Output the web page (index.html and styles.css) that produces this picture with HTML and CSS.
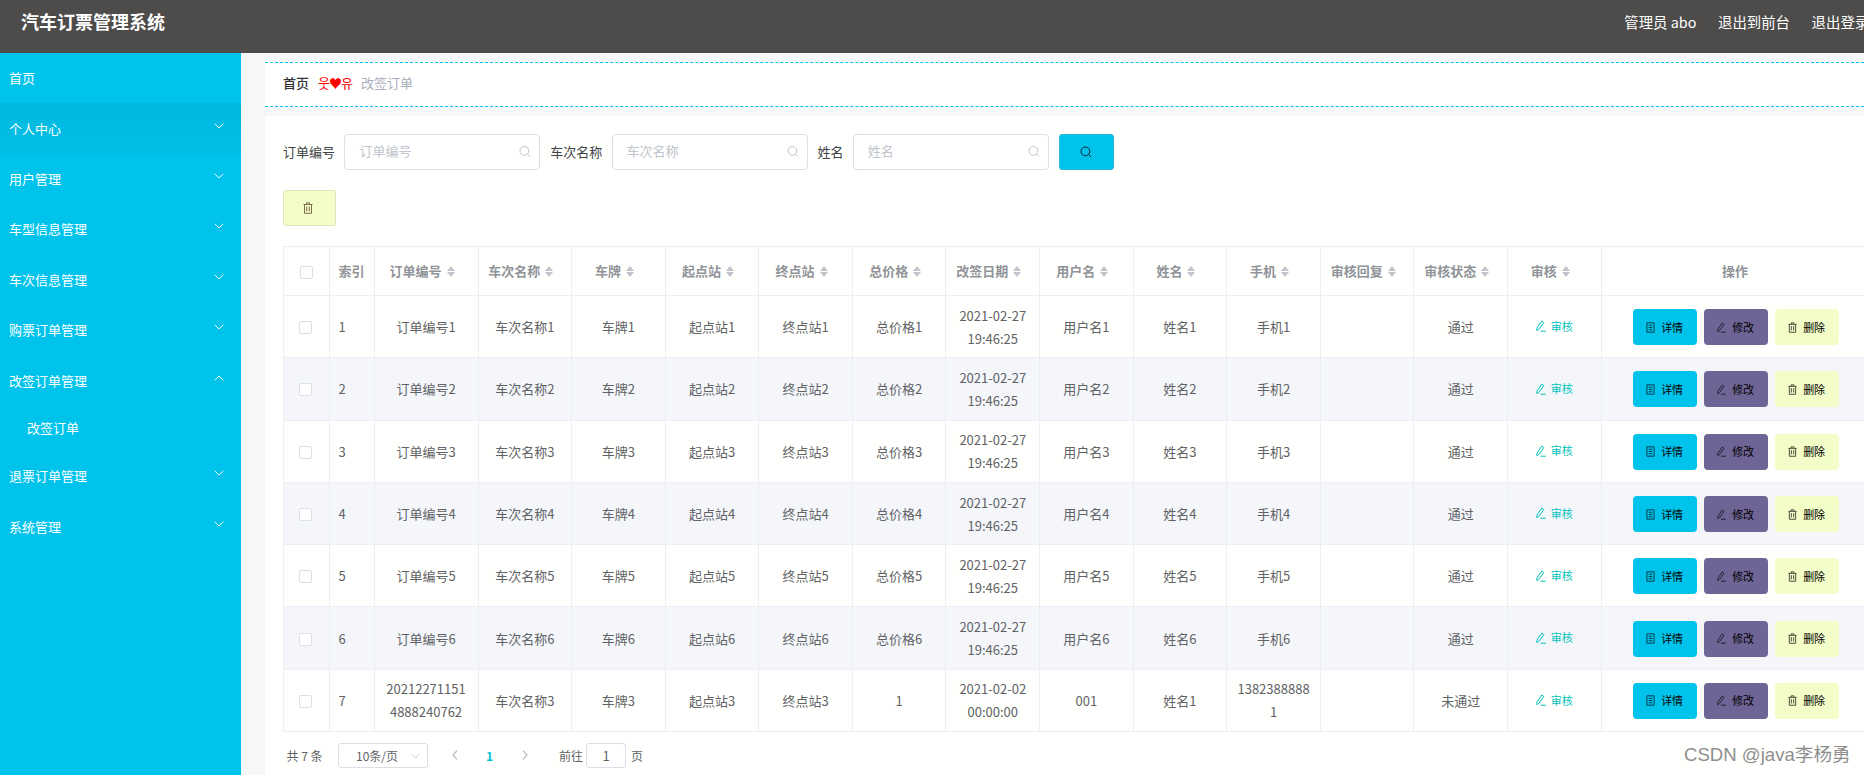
FILE: index.html
```html
<!DOCTYPE html>
<html lang="zh-CN">
<head>
<meta charset="utf-8">
<title>汽车订票管理系统</title>
<link rel="stylesheet" href="styles.css">
</head>
<body>
<svg class="defs" width="0" height="0" aria-hidden="true">
  <symbol id="i-search" viewBox="0 0 12 12"><circle cx="5.4" cy="5.4" r="4.4" fill="none" stroke="currentColor" stroke-width="1"/><path d="M8.6 8.6L11 11" fill="none" stroke="currentColor" stroke-width="1"/></symbol>
  <symbol id="i-trash" viewBox="0 0 10 12"><path d="M0.5 2.5H9.5M3.5 2.5V0.8H6.5V2.5M1.5 2.5V11.3H8.5V2.5M3.7 4.5V9.3M6.3 4.5V9.3" fill="none" stroke="currentColor" stroke-width="1"/></symbol>
  <symbol id="i-doc" viewBox="0 0 10 12"><path d="M1 0.8H9V11.2H1ZM3 3.5H7M3 6H7M3 8.5H7" fill="none" stroke="currentColor" stroke-width="1"/></symbol>
  <symbol id="i-pen" viewBox="0 0 10 12"><path d="M5.8 1L7.8 2.6L2.8 9.4L0.8 10.6L1 8ZM4.5 11.2H9.8" fill="none" stroke="currentColor" stroke-width="1"/></symbol>
  <symbol id="i-down" viewBox="0 0 10 6"><path d="M0.7 0.8L5 5L9.3 0.8" fill="none" stroke="currentColor" stroke-width="1"/></symbol>
  <symbol id="i-up" viewBox="0 0 10 6"><path d="M0.7 5.2L5 1L9.3 5.2" fill="none" stroke="currentColor" stroke-width="1"/></symbol>
  <symbol id="i-left" viewBox="0 0 6 10"><path d="M5 0.7L1 5L5 9.3" fill="none" stroke="currentColor" stroke-width="1.2"/></symbol>
  <symbol id="i-right" viewBox="0 0 6 10"><path d="M1 0.7L5 5L1 9.3" fill="none" stroke="currentColor" stroke-width="1.2"/></symbol>
</svg>
<header class="topbar">
  <div class="brand">汽车订票管理系统</div>
  <nav class="top-links"><span>管理员 abo</span><span>退出到前台</span><span>退出登录</span></nav>
</header>
<div class="layout">
  <aside class="sidebar">
    <div class="menu-item menu-first"><span>首页</span></div>
    <div class="menu-item is-hover"><span>个人中心</span><svg class="chev"><use href="#i-down"/></svg></div>
    <div class="menu-item"><span>用户管理</span><svg class="chev"><use href="#i-down"/></svg></div>
    <div class="menu-item"><span>车型信息管理</span><svg class="chev"><use href="#i-down"/></svg></div>
    <div class="menu-item"><span>车次信息管理</span><svg class="chev"><use href="#i-down"/></svg></div>
    <div class="menu-item"><span>购票订单管理</span><svg class="chev"><use href="#i-down"/></svg></div>
    <div class="menu-item"><span>改签订单管理</span><svg class="chev"><use href="#i-up"/></svg></div>
    <div class="submenu-item">改签订单</div>
    <div class="menu-item"><span>退票订单管理</span><svg class="chev"><use href="#i-down"/></svg></div>
    <div class="menu-item"><span>系统管理</span><svg class="chev"><use href="#i-down"/></svg></div>
  </aside>
  <main class="main">
    <div class="crumbs">
      <span class="crumb-home">首页</span>
      <span class="crumb-sep">웃♥유</span>
      <span class="crumb-cur">改签订单</span>
    </div>
    <section class="panel">
      <form class="search-row">
        <label class="field-label">订单编号</label>
        <div class="input-wrap"><input class="text-input" placeholder="订单编号"><svg class="input-icon"><use href="#i-search"/></svg></div>
        <label class="field-label">车次名称</label>
        <div class="input-wrap"><input class="text-input" placeholder="车次名称"><svg class="input-icon"><use href="#i-search"/></svg></div>
        <label class="field-label">姓名</label>
        <div class="input-wrap"><input class="text-input" placeholder="姓名"><svg class="input-icon"><use href="#i-search"/></svg></div>
        <button class="search-btn" type="button"><svg class="search-btn-icon"><use href="#i-search"/></svg></button>
      </form>
      <div class="tool-row"><button class="bulk-del" type="button"><svg class="bulk-del-icon"><use href="#i-trash"/></svg></button></div>
      <table class="grid">
        <colgroup>
          <col class="c-check"><col class="c-index"><col class="c-order">
          <col class="c-std"><col class="c-std"><col class="c-std"><col class="c-std"><col class="c-std"><col class="c-std"><col class="c-std"><col class="c-std"><col class="c-std"><col class="c-std"><col class="c-std"><col class="c-std">
          <col class="c-ops">
        </colgroup>
        <thead>
          <tr>
            <th class="cell-check-h"><i class="check"></i></th>
            <th class="cell-index">索引</th>
            <th>订单编号<i class="sort"></i></th>
            <th>车次名称<i class="sort"></i></th>
            <th>车牌<i class="sort"></i></th>
            <th>起点站<i class="sort"></i></th>
            <th>终点站<i class="sort"></i></th>
            <th>总价格<i class="sort"></i></th>
            <th>改签日期<i class="sort"></i></th>
            <th>用户名<i class="sort"></i></th>
            <th>姓名<i class="sort"></i></th>
            <th>手机<i class="sort"></i></th>
            <th>审核回复<i class="sort"></i></th>
            <th>审核状态<i class="sort"></i></th>
            <th>审核<i class="sort"></i></th>
            <th class="cell-ops-h">操作</th>
          </tr>
        </thead>
        <tbody>
          <tr>
            <td class="cell-check"><i class="check"></i></td><td class="cell-index">1</td><td>订单编号1</td><td>车次名称1</td><td>车牌1</td><td>起点站1</td><td>终点站1</td><td>总价格1</td><td>2021-02-27 19:46:25</td><td>用户名1</td><td>姓名1</td><td>手机1</td><td></td><td>通过</td>
            <td><a class="audit"><svg class="audit-icon"><use href="#i-pen"/></svg>审核</a></td>
            <td><div class="ops"><button class="op op-detail" type="button"><svg class="op-icon"><use href="#i-doc"/></svg>详情</button><button class="op op-edit" type="button"><svg class="op-icon"><use href="#i-pen"/></svg>修改</button><button class="op op-del" type="button"><svg class="op-icon"><use href="#i-trash"/></svg>删除</button></div></td>
          </tr>
          <tr class="alt">
            <td class="cell-check"><i class="check"></i></td><td class="cell-index">2</td><td>订单编号2</td><td>车次名称2</td><td>车牌2</td><td>起点站2</td><td>终点站2</td><td>总价格2</td><td>2021-02-27 19:46:25</td><td>用户名2</td><td>姓名2</td><td>手机2</td><td></td><td>通过</td>
            <td><a class="audit"><svg class="audit-icon"><use href="#i-pen"/></svg>审核</a></td>
            <td><div class="ops"><button class="op op-detail" type="button"><svg class="op-icon"><use href="#i-doc"/></svg>详情</button><button class="op op-edit" type="button"><svg class="op-icon"><use href="#i-pen"/></svg>修改</button><button class="op op-del" type="button"><svg class="op-icon"><use href="#i-trash"/></svg>删除</button></div></td>
          </tr>
          <tr>
            <td class="cell-check"><i class="check"></i></td><td class="cell-index">3</td><td>订单编号3</td><td>车次名称3</td><td>车牌3</td><td>起点站3</td><td>终点站3</td><td>总价格3</td><td>2021-02-27 19:46:25</td><td>用户名3</td><td>姓名3</td><td>手机3</td><td></td><td>通过</td>
            <td><a class="audit"><svg class="audit-icon"><use href="#i-pen"/></svg>审核</a></td>
            <td><div class="ops"><button class="op op-detail" type="button"><svg class="op-icon"><use href="#i-doc"/></svg>详情</button><button class="op op-edit" type="button"><svg class="op-icon"><use href="#i-pen"/></svg>修改</button><button class="op op-del" type="button"><svg class="op-icon"><use href="#i-trash"/></svg>删除</button></div></td>
          </tr>
          <tr class="alt">
            <td class="cell-check"><i class="check"></i></td><td class="cell-index">4</td><td>订单编号4</td><td>车次名称4</td><td>车牌4</td><td>起点站4</td><td>终点站4</td><td>总价格4</td><td>2021-02-27 19:46:25</td><td>用户名4</td><td>姓名4</td><td>手机4</td><td></td><td>通过</td>
            <td><a class="audit"><svg class="audit-icon"><use href="#i-pen"/></svg>审核</a></td>
            <td><div class="ops"><button class="op op-detail" type="button"><svg class="op-icon"><use href="#i-doc"/></svg>详情</button><button class="op op-edit" type="button"><svg class="op-icon"><use href="#i-pen"/></svg>修改</button><button class="op op-del" type="button"><svg class="op-icon"><use href="#i-trash"/></svg>删除</button></div></td>
          </tr>
          <tr>
            <td class="cell-check"><i class="check"></i></td><td class="cell-index">5</td><td>订单编号5</td><td>车次名称5</td><td>车牌5</td><td>起点站5</td><td>终点站5</td><td>总价格5</td><td>2021-02-27 19:46:25</td><td>用户名5</td><td>姓名5</td><td>手机5</td><td></td><td>通过</td>
            <td><a class="audit"><svg class="audit-icon"><use href="#i-pen"/></svg>审核</a></td>
            <td><div class="ops"><button class="op op-detail" type="button"><svg class="op-icon"><use href="#i-doc"/></svg>详情</button><button class="op op-edit" type="button"><svg class="op-icon"><use href="#i-pen"/></svg>修改</button><button class="op op-del" type="button"><svg class="op-icon"><use href="#i-trash"/></svg>删除</button></div></td>
          </tr>
          <tr class="alt">
            <td class="cell-check"><i class="check"></i></td><td class="cell-index">6</td><td>订单编号6</td><td>车次名称6</td><td>车牌6</td><td>起点站6</td><td>终点站6</td><td>总价格6</td><td>2021-02-27 19:46:25</td><td>用户名6</td><td>姓名6</td><td>手机6</td><td></td><td>通过</td>
            <td><a class="audit"><svg class="audit-icon"><use href="#i-pen"/></svg>审核</a></td>
            <td><div class="ops"><button class="op op-detail" type="button"><svg class="op-icon"><use href="#i-doc"/></svg>详情</button><button class="op op-edit" type="button"><svg class="op-icon"><use href="#i-pen"/></svg>修改</button><button class="op op-del" type="button"><svg class="op-icon"><use href="#i-trash"/></svg>删除</button></div></td>
          </tr>
          <tr>
            <td class="cell-check"><i class="check"></i></td><td class="cell-index">7</td><td class="break">20212271151 4888240762</td><td>车次名称3</td><td>车牌3</td><td>起点站3</td><td>终点站3</td><td>1</td><td>2021-02-02 00:00:00</td><td>001</td><td>姓名1</td><td class="break">13823888881</td><td></td><td>未通过</td>
            <td><a class="audit"><svg class="audit-icon"><use href="#i-pen"/></svg>审核</a></td>
            <td><div class="ops"><button class="op op-detail" type="button"><svg class="op-icon"><use href="#i-doc"/></svg>详情</button><button class="op op-edit" type="button"><svg class="op-icon"><use href="#i-pen"/></svg>修改</button><button class="op op-del" type="button"><svg class="op-icon"><use href="#i-trash"/></svg>删除</button></div></td>
          </tr>
        </tbody>
      </table>
      <div class="pager">
        <span class="pager-total">共 7 条</span>
        <div class="pager-size"><span>10条/页</span><svg class="pager-size-icon"><use href="#i-down"/></svg></div>
        <svg class="pager-arrow pager-prev"><use href="#i-left"/></svg>
        <span class="pager-num">1</span>
        <svg class="pager-arrow pager-next"><use href="#i-right"/></svg>
        <span class="pager-goto">前往</span>
        <input class="pager-input" value="1">
        <span class="pager-unit">页</span>
      </div>
    </section>
  </main>
</div>
<div class="watermark">CSDN @java李杨勇</div>
</body>
</html>
```

FILE: styles.css
```css
* { box-sizing: border-box; }
html, body { margin: 0; padding: 0; height: 775px; overflow: hidden; }
body {
  position: relative;
  font-family: "Noto Sans CJK SC", "Liberation Sans", sans-serif;
  font-size: 13px;
  color: #606266;
  background: #f5f7f9;
}
.defs { position: absolute; }

.topbar {
  height: 53px;
  background: #4d4c4a;
  color: #fff;
  display: flex;
  justify-content: space-between;
  padding: 0 0 11px 21px;
  align-items: center;
  overflow: hidden;
}
.brand { font-size: 18px; font-weight: 700; white-space: nowrap; }
.top-links {
  display: flex;
  gap: 21.6px;
  font-size: 14.4px;
  white-space: nowrap;
  margin-right: -5.2px;
}

.layout { display: flex; height: 722px; }
.sidebar { flex: 0 0 241px; background: #00c3ec; color: #fff; }
.menu-item {
  height: 50.4px;
  padding: 0 18px 1px 9px;
  display: flex;
  align-items: center;
  justify-content: space-between;
}
.menu-item.menu-first { padding-bottom: 2px; }
.menu-item.is-hover { background: linear-gradient(#00b8df, #00bfe7); }
.chev { width: 10px; height: 6px; margin-bottom: 5px; margin-right: -1px; color: #e6fbff; }
.submenu-item { height: 45.3px; padding: 0 0 2px 27px; display: flex; align-items: center; }

.main { flex: 1; min-width: 0; padding: 9px 0 0 24px; overflow: hidden; }
.crumbs {
  height: 45px;
  background: #fff;
  border-top: 1px dashed #00c3ec;
  border-bottom: 1px dashed #00c3ec;
  padding: 0 0 4px 18px;
  display: flex;
  align-items: center;
  gap: 9px;
}
.crumb-home { color: #303133; font-weight: 500; }
.crumb-sep { color: #f00; font-family: "Noto Sans CJK KR", sans-serif; font-size: 13px; letter-spacing: -1px; }
.crumb-cur { color: #a8aebb; }

.panel { margin-top: 9px; width: 1630px; height: 660px; background: #fffffd; padding: 18px 0 0 18px; }
.search-row { display: flex; align-items: center; height: 36px; }
.field-label { margin: 0 9.4px 2px 0; color: #404245; }
.input-wrap { position: relative; width: 196px; height: 36px; margin-right: 9.8px; }
.text-input {
  width: 100%;
  height: 100%;
  border: 1px solid #dcdfe6;
  border-radius: 4px;
  padding: 0 28px 3px 14px;
  font: inherit;
  background: #fff;
  outline: none;
}
.text-input::placeholder { color: #c0c4cc; opacity: 1; }
.input-icon { position: absolute; right: 9px; top: 11px; width: 12px; height: 13px; color: #c0c4cc; }
.search-btn {
  width: 55px;
  height: 36px;
  background: #00c3ec;
  border: 1px solid #2cb9d8;
  border-radius: 3px;
  padding: 0;
  display: flex;
  align-items: center;
  justify-content: center;
}
.search-btn-icon { width: 12px; height: 12px; color: #123; }

.tool-row { margin-top: 20px; height: 36px; }
.bulk-del {
  width: 53px;
  height: 36px;
  background: #f3fdc7;
  border: 1px solid #dfe3bd;
  border-radius: 3px;
  padding: 0;
  display: flex;
  align-items: center;
  justify-content: center;
}
.bulk-del-icon { width: 10px; height: 12px; color: #7c6f4a; margin-right: 3px; }

.grid {
  margin-top: 20px;
  width: 1589px;
  table-layout: fixed;
  border-collapse: separate;
  border-spacing: 0;
  border-top: 1px solid #ebeef5;
  border-left: 1px solid #ebeef5;
  text-align: center;
}
.c-check { width: 45.5px; }
.c-index { width: 45px; }
.c-order { width: 104px; }
.c-std { width: 93.6px; }
.c-ops { width: 271px; }
.grid th, .grid td {
  border-right: 1px solid #ebeef5;
  border-bottom: 1px solid #ebeef5;
  padding: 7px 10px;
  font-weight: 400;
}
.grid th { height: 49px; color: #909399; font-weight: 700; padding: 0 11px 2px 4px; white-space: nowrap; }
.grid td { height: 62.3px; line-height: 23px; }
.grid th.cell-index, .grid td.cell-index { text-align: left; padding-left: 9px; padding-right: 0; }
.grid th.cell-ops-h { padding: 0 3px 2px 0; }
.grid td.break { word-break: break-all; padding-left: 9px; padding-right: 9px; }
.alt td { background: #f4f6fa; }
.grid th.cell-check-h { padding: 0; }
.grid td.cell-check { padding: 0 2px 2px 0; }
.check {
  display: inline-block;
  vertical-align: middle;
  width: 13px;
  height: 13px;
  background: #fff;
  border: 1px solid #dcdfe6;
  border-radius: 2px;
}
.sort {
  display: inline-block;
  vertical-align: -1px;
  position: relative;
  width: 9px;
  height: 11px;
  margin-left: 5px;
}
.sort::before, .sort::after {
  content: "";
  position: absolute;
  left: 0;
  border-left: 4.5px solid transparent;
  border-right: 4.5px solid transparent;
}
.sort::before { top: 0; border-bottom: 5px solid #c0c4cc; }
.sort::after { bottom: 0; border-top: 5px solid #c0c4cc; }

.audit { color: #00c2bc; font-size: 11px; display: inline-flex; align-items: center; gap: 5px; }
.audit-icon { width: 10px; height: 12px; }
.ops { display: flex; justify-content: center; gap: 7px; margin: 1px 2px 0 0; }
.op {
  width: 64px;
  height: 36px;
  border: 0;
  border-radius: 4px;
  padding: 0;
  color: #000;
  font: inherit;
  font-size: 11px;
  display: flex;
  align-items: center;
  justify-content: center;
  gap: 6px;
}
.op-icon { width: 9px; height: 11px; opacity: .75; }
.op-detail { background: #00c3ec; }
.op-edit { background: #6f6496; }
.op-del { background: #f3fdc7; }

.pager { display: flex; align-items: center; height: 26px; margin-top: 10px; font-size: 12px; color: #606266; }
.pager-total { margin-left: 3.5px; width: 51.5px; }
.pager-size {
  width: 90px;
  height: 25px;
  border: 1px solid #dcdfe6;
  border-radius: 3px;
  background: #fff;
  padding: 0 7px 0 17px;
  display: flex;
  align-items: center;
  justify-content: space-between;
}
.pager-size-icon { width: 9px; height: 6px; color: #c0c4cc; margin-top: 2px; }
.pager-arrow { width: 6px; height: 10px; color: #b5b9c2; }
.pager-prev { margin-left: 24px; }
.pager-num { color: #00c3d0; font-weight: 700; width: 6px; margin-left: 28px; }
.pager-next { margin-left: 30px; }
.pager-goto { margin-left: 31px; }
.pager-input {
  width: 40px;
  height: 25px;
  margin-left: 3px;
  border: 1px solid #dcdfe6;
  border-radius: 3px;
  text-align: center;
  font: inherit;
  font-size: 13px;
  color: #606266;
  padding: 0;
  background: #fff;
}
.pager-unit { margin-left: 5px; }

.watermark {
  position: absolute;
  left: 1684px;
  top: 743px;
  font-family: "Liberation Sans", "Noto Sans CJK SC", sans-serif;
  font-size: 18.6px;
  line-height: 24px;
  color: #8f8f8f;
  white-space: nowrap;
  text-shadow: 0 0 1px #fff;
}
```
